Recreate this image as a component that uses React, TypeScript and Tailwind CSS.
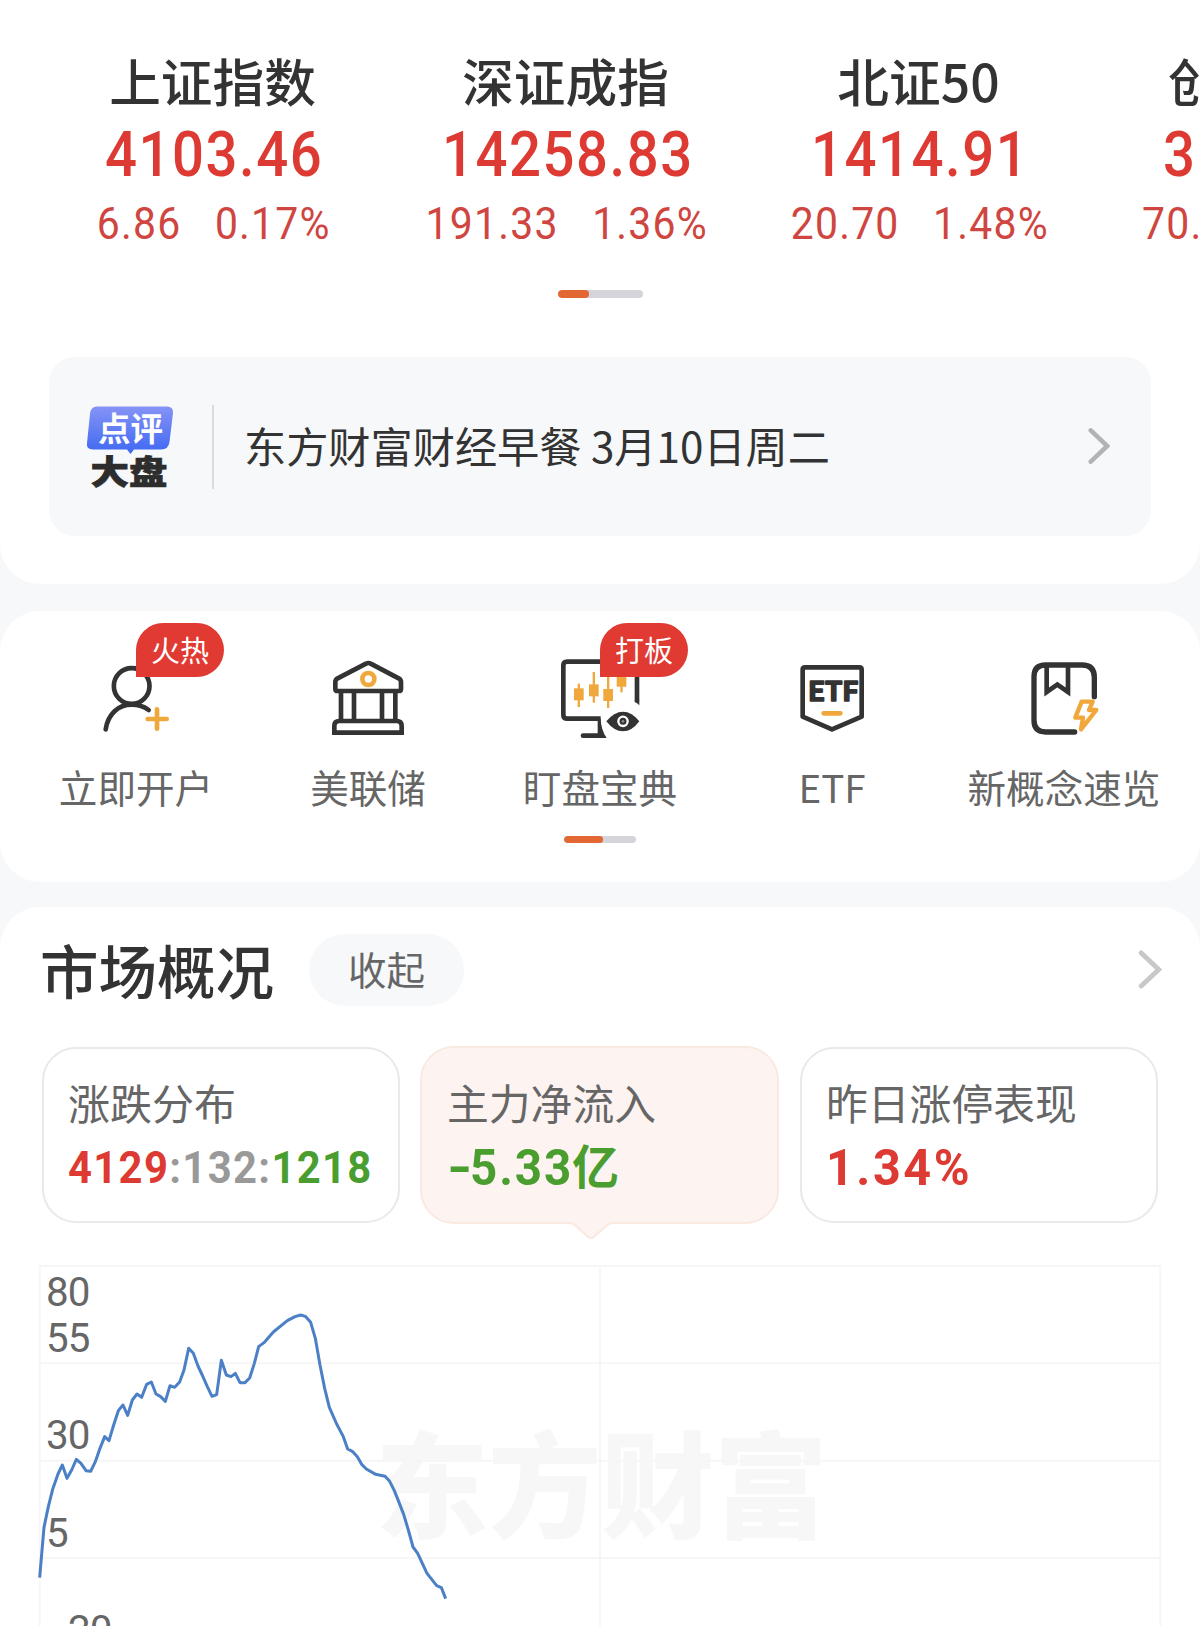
import React from "react";

const CJK = "font-['Noto_Sans_CJK_SC',sans-serif]";
const NUM = "font-['Roboto','Noto_Sans_CJK_SC',sans-serif]";
const DARK = "#333333";
const ORANGE = "#f0a73c";

const indices = [
  { name: "上证指数", value: "4103.46", change: "6.86", percent: "0.17%" },
  { name: "深证成指", value: "14258.83", change: "191.33", percent: "1.36%" },
  { name: "北证50", value: "1414.91", change: "20.70", percent: "1.48%" },
];

function IndexColumn({ name, value, change, percent }: (typeof indices)[number]) {
  return (
    <div className="flex w-[353px] shrink-0 flex-col items-center whitespace-nowrap">
      <div className={`${CJK} h-[60px] text-[51.7px] leading-[60px] font-medium text-[#333]`}>{name}</div>
      <div className={`${NUM} mt-[15px] ml-[4px] h-[60px] scale-x-[0.9] text-[62.5px] leading-[60px] font-medium tracking-[1.7px] text-[#dc3a32]`}>
        {value}
      </div>
      <div className={`${NUM} mt-[15px] ml-[2px] flex h-[48px] scale-x-[0.93] gap-[36px] text-[44px] leading-[48px] tracking-[1.3px] text-[#cf453f]`}>
        <span>{change}</span>
        <span>{percent}</span>
      </div>
    </div>
  );
}

function Chevron({ className }: { className: string }) {
  return (
    <svg viewBox="0 0 24 40" fill="none" strokeWidth="5" strokeLinecap="round" className={className}>
      <path d="M3 3 L21 20 L3 37" stroke="currentColor" />
    </svg>
  );
}

function ReviewLogo() {
  return (
    <svg viewBox="0 0 90 86" className="h-[86px] w-[90px] shrink-0">
      <defs>
        <linearGradient id="bubble" x1="0" y1="0" x2="0" y2="1">
          <stop offset="0" stopColor="#8593f6" />
          <stop offset="1" stopColor="#3f68f2" />
        </linearGradient>
      </defs>
      <path
        d="M12 2.500 H82 Q88.500 2.500 88 9 L84.500 38 Q83.500 45.500 76 45.500 H49 L45.500 50 L42 45.500 H8 Q1 45.500 2 39 L5 10 Q5.500 2.500 12 2.500Z"
        fill="url(#bubble)"
      />
      <text x="13" y="36.500" fontSize="32.500" fontWeight="700" fill="#fff" fontFamily="Noto Sans CJK SC, sans-serif">
        点评
      </text>
      <text
        transform="translate(5.500 79.500) scale(1 .87)"
        fontSize="38.500"
        fontWeight="900"
        fill="#2d2d2d"
        stroke="#2d2d2d"
        strokeWidth=".8"
        fontFamily="Noto Sans CJK SC, sans-serif"
      >
        大盘
      </text>
    </svg>
  );
}

function IconFrame({ viewBox, children }: { viewBox: string; children: React.ReactNode }) {
  return (
    <svg viewBox={viewBox} fill="none" stroke={DARK} strokeWidth="14" className="size-[100px]">
      {children}
    </svg>
  );
}

const shortcuts = [
  {
    label: "立即开户",
    badge: "火热",
    icon: (
      <IconFrame viewBox="78 120 300 300">
        <circle cx="215" cy="228" r="53.500" />
        <path d="M137 358 C144 312 175 284 215 284 Q245 284 266 300" strokeLinecap="round" />
        <path d="M263 327 H320 M291 298 V356" stroke={ORANGE} strokeLinecap="round" />
      </IconFrame>
    ),
  },
  {
    label: "美联储",
    icon: (
      <IconFrame viewBox="774 120 300 300">
        <path
          d="M918 161 Q925 157 932 161 L1016 205 Q1023 209 1023 216 V236 Q1023 243 1016 243 H833 Q826 243 826 236 V216 Q826 209 833 205Z"
          strokeWidth="14"
        />
        <path d="M843 244 V332 M1006 244 V332 M882 244 V332 M966 244 V332" strokeWidth="14" />
        <path d="M823 368 V348 Q823 333 838 333 H1010 Q1025 333 1025 348 V368Z" strokeWidth="14" />
        <circle cx="925" cy="207" r="18" stroke={ORANGE} strokeWidth="14" />
      </IconFrame>
    ),
  },
  {
    label: "盯盘宝典",
    badge: "打板",
    icon: (
      <IconFrame viewBox="150 120 300 300">
        <path d="M302 326 H202 Q190 326 190 314 V166 Q190 155 202 155 H399 Q411 155 411 166 V272" />
        <path d="M404 270 H418 V286 Q411 279 404 276Z" fill={DARK} stroke="none" />
        <path d="M249 377 H304" strokeLinecap="round" />
        <path d="M293 326 H302 Q303 359 320 384 H293Z" fill={DARK} stroke="none" />
        <g fill={ORANGE} stroke="none">
          <rect x="222" y="235" width="29" height="36" />
          <rect x="233" y="221" width="7" height="70" />
          <rect x="267" y="223" width="29" height="36" />
          <rect x="278" y="186" width="7" height="92" />
          <rect x="310" y="237" width="29" height="36" />
          <rect x="321" y="200" width="7" height="94" />
          <rect x="350" y="193" width="29" height="37" />
          <rect x="361" y="180" width="7" height="67" />
        </g>
        <path
          d="M319 334 Q342 305 369 305 Q396 305 418 334 Q396 364 369 364 Q342 364 319 334Z"
          fill={DARK}
          stroke="none"
        />
        <circle cx="369" cy="334" r="14" fill={DARK} stroke="#fff" strokeWidth="7" />
        <circle cx="369" cy="334" r="4" fill="#8a8a8a" stroke="none" />
      </IconFrame>
    ),
  },
  {
    label: "ETF",
    icon: (
      <IconFrame viewBox="846 120 300 300">
        <path d="M915 172 H1078 Q1085 172 1085 179 V320 L996 358 L908 320 V179 Q908 172 915 172Z" strokeLinejoin="round" />
        <text
          x="926"
          y="274"
          fontSize="82"
          fontWeight="700"
          fill={DARK}
          stroke={DARK}
          strokeWidth="5"
          strokeLinejoin="round"
          textLength="148"
          lengthAdjust="spacing"
          fontFamily="Roboto, sans-serif"
        >
          ETF
        </text>
        <path d="M971 310 H1021" stroke={ORANGE} strokeLinecap="round" />
      </IconFrame>
    ),
  },
  {
    label: "新概念速览",
    icon: (
      <IconFrame viewBox="342 120 300 300">
        <path
          d="M583 260 V202 Q583 165 546 165 H437 Q402 165 402 200 V331 Q402 366 437 366 H524"
          strokeWidth="16"
          strokeLinecap="round"
        />
        <path d="M440 166 V246 L472 224 L504 246 V166" strokeWidth="14" />
        <path d="M545 275 H578 L567 300 H589 L543 358 L549 323 H526Z" stroke={ORANGE} strokeWidth="13" strokeLinejoin="round" />
      </IconFrame>
    ),
  },
];

const yLabels = [
  { text: "80", y: 169 },
  { text: "55", y: 306 },
  { text: "30", y: 597 },
  { text: "5", y: 891 },
  { text: "−20", y: 1182 },
];

const flowLine =
  "119,983 132,832 145,770 158,718 174,672 187,645 201,685 215,660 229,628 243,640 258,662 272,664 286,635 300,595 314,560 327,572 341,525 355,482 369,465 383,496 397,450 411,432 425,442 440,403 454,396 468,432 482,440 496,454 510,407 524,412 539,396 552,360 566,295 580,310 594,348 608,378 622,410 636,439 650,434 664,331 679,375 693,380 706,370 720,398 735,398 749,384 763,340 776,290 792,278 820,246 862,212 885,200 902,195 916,199 932,217 946,265 960,345 974,415 988,472 1010,522 1030,560 1043,597 1057,604 1072,620 1085,643 1099,657 1127,673 1155,679 1169,694 1183,722 1197,757 1211,793 1225,840 1239,891 1253,910 1281,970 1310,1007 1324,1013 1337,1046";

function FlowChart() {
  return (
    <svg viewBox="0 0 3600 1128" className="block h-[376px] w-[1200px]">
      <text
        transform="translate(1126 838) scale(1 1.02)"
        fontSize="339"
        fontWeight="900"
        fill="#f7f7f7"
        fontFamily="Noto Sans CJK SC, sans-serif"
      >
        东方财富
      </text>
      <path
        d="M119 1128 V48 H3481 V1128 M119 340 H3481 M119 632 H3481 M119 924 H3481 M1800 48 V1128"
        fill="none"
        stroke="#f6f6f6"
        strokeWidth="6"
      />
      {yLabels.map((l) => (
        <text key={l.text} x="138" y={l.y} fontSize="121" fill="#666" fontFamily="Roboto, sans-serif" letterSpacing="-3">
          {l.text}
        </text>
      ))}
      <polyline points={flowLine} fill="none" stroke="#4b7fc6" strokeWidth="9" strokeLinejoin="round" />
    </svg>
  );
}

export default function App() {
  return (
    <div className={`${CJK} flex h-[1626px] w-[1200px] flex-col overflow-hidden bg-[#f6f8fa]`}>
      <section className="h-[584px] shrink-0 overflow-hidden rounded-b-[40px] bg-white pt-[50px]">
        <div className="flex pl-[36px]">
          {indices.map((item) => (
            <IndexColumn key={item.name} {...item} />
          ))}
          <div className="shrink-0 whitespace-nowrap">
            <div className="h-[60px] pl-[73px] text-[51.7px] leading-[60px] font-medium text-[#333]">创</div>
            <div className={`${NUM} mt-[15px] ml-[68px] h-[60px] origin-left scale-x-[0.9] text-[62.5px] leading-[60px] font-medium tracking-[0.5px] text-[#dc3a32]`}>
              31
            </div>
            <div className={`${NUM} mt-[15px] ml-[47px] h-[48px] origin-left scale-x-[0.93] text-[44px] leading-[48px] tracking-[1.3px] text-[#cf453f]`}>
              70.
            </div>
          </div>
        </div>
        <div className="mx-auto mt-[42px] h-2 w-[85px] overflow-hidden rounded-full bg-[#d4d4da]">
          <div className="h-full w-[31px] rounded-full bg-[#e26732]" />
        </div>
        <div className="mx-[49px] mt-[59px] flex h-[179px] items-center rounded-[26px] bg-[#f7f8fa] pr-[41px] pl-[36px]">
          <ReviewLogo />
          <div className="ml-[37px] h-[84px] w-[2px] bg-[#dadada]" />
          <div className="-mt-[3px] ml-[30px] flex-1 text-[42.2px] leading-[60px] whitespace-nowrap text-[#333]">
            东方财富财经早餐 3月10日周二
          </div>
          <Chevron className="-mt-[2px] h-[38px] w-[22px] text-[#b3b3b3]" />
        </div>
      </section>

      <section className="mt-[27px] h-[271px] shrink-0 rounded-[40px] bg-white px-[20px] pt-[39px]">
        <div className="flex">
          {shortcuts.map((s) => (
            <div key={s.label} className="flex w-[232px] flex-col items-center">
              <div className="relative">
                {s.icon}
                {s.badge && (
                  <span className="absolute top-[-27px] left-[50px] flex h-[54px] w-[88px] items-center justify-center rounded-[27px] rounded-bl-none bg-[#e03a33] pb-[2px] text-[29px] leading-none whitespace-nowrap text-white">
                    {s.badge}
                  </span>
                )}
              </div>
              <div className="mt-[12px] h-[48px] text-[38.6px] leading-[48px] whitespace-nowrap text-[#666]">{s.label}</div>
            </div>
          ))}
        </div>
        <div className="mx-auto mt-[26px] h-[7px] w-[72px] overflow-hidden rounded-full bg-[#d4d4da]">
          <div className="h-full w-[39px] rounded-full bg-[#e26732]" />
        </div>
      </section>

      <section className="mt-[25px] shrink-0 rounded-t-[40px] bg-white pt-[27px]">
        <div className="flex h-[72px] items-center pr-[38px] pl-[40px]">
          <h2 className="-mt-[3px] text-[58.5px] leading-[72px] font-medium whitespace-nowrap text-[#333]">市场概况</h2>
          <div className="ml-[35px] flex h-[72px] w-[155px] items-center justify-center rounded-full bg-[#f6f8fa] pb-[3px] text-[38.5px] text-[#666]">
            收起
          </div>
          <Chevron className="-mt-[1px] ml-auto h-[39px] w-[24px] text-[#c8c8c8]" />
        </div>
        <div className="mt-[41px] flex h-[176px] gap-[21px] px-[42px]">
          <div className="h-[176px] w-[358px] rounded-[34px] border-2 border-[#e9e9e9] pt-[27px] pl-[24px] whitespace-nowrap">
            <div className="h-[52px] text-[42px] leading-[52px] text-[#666]">涨跌分布</div>
            <div className={`${NUM} mt-[12px] flex h-[56px] origin-left scale-x-[0.95] text-[44px] leading-[56px] font-bold tracking-[1.4px] text-[#999]`}>
              <span className="text-[#dc3a32]">4129</span>
              <span>:132:</span>
              <span className="text-[#4a9e2f]">1218</span>
            </div>
          </div>
          <div className="relative -mt-px -ml-px h-[178px] w-[359px] rounded-[34px] border-2 border-[#fae9e0] bg-[#fdf4f1] pt-[28px] pl-[25px] whitespace-nowrap">
            <div className="h-[52px] text-[41.8px] leading-[52px] text-[#666]">主力净流入</div>
            <div className={`${NUM} mt-[12px] flex h-[56px] text-[50px] leading-[56px] font-bold text-[#4a9e2f]`}>
              <span className="w-[23px] origin-left scale-x-[1.3]">-</span>
              <span className="w-[102px] origin-left scale-x-[0.95] tracking-[2px]">5.33</span>
              <span className="text-[47px]">亿</span>
            </div>
            <svg viewBox="0 0 44 19" className="absolute -bottom-[18px] left-[147px] h-[19px] w-[44px]">
              <path d="M0 0 H44 V1.500 Q40 1.500 37 4 L26 15 Q22 19 18 15 L7 4 Q4 1.500 0 1.500Z" fill="#fdf4f1" />
              <path d="M0 2 Q4 2 7 5 L18 15 Q22 19 26 15 L37 5 Q40 2 44 2" fill="none" stroke="#fae9e0" strokeWidth="2" />
            </svg>
          </div>
          <div className="h-[176px] w-[358px] rounded-[34px] border-2 border-[#e9e9e9] pt-[27px] pl-[24px] whitespace-nowrap">
            <div className="h-[52px] text-[41.8px] leading-[52px] text-[#666]">昨日涨停表现</div>
            <div className={`${NUM} mt-[12px] h-[56px] origin-left scale-x-[0.97] text-[50px] leading-[56px] font-bold tracking-[2.6px] text-[#dc3a32]`}>
              1.34%
            </div>
          </div>
        </div>
        <div className="mt-[27px]">
          <FlowChart />
        </div>
      </section>
    </div>
  );
}
